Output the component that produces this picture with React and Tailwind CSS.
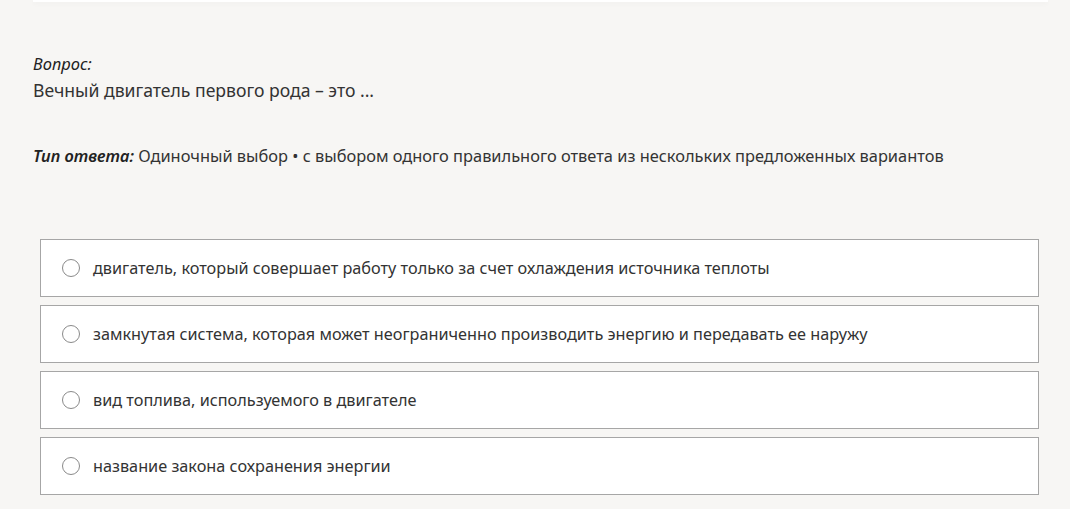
const options = [
  "двигатель, который совершает работу только за счет охлаждения источника теплоты",
  "замкнутая система, которая может неограниченно производить энергию и передавать ее наружу",
  "вид топлива, используемого в двигателе",
  "название закона сохранения энергии",
];

export default function App() {
  return (
    <div
      className="min-h-[509px] bg-[#f7f6f4] text-[#2b2b2b]"
      style={{ fontFamily: '"Noto Sans", "Open Sans", sans-serif' }}
    >
      {/* top card edge */}
      <div className="mx-[33px] mr-[22px] h-[2px] bg-white shadow-[0_2px_4px_rgba(0,0,0,0.04)]" />

      <div className="pl-[33px] pr-[31px] pt-[51px]">
        <p className="text-[16.5px] italic leading-[22px] text-[#222]">Вопрос:</p>
        <p className="mt-[3px] text-[17.6px] leading-[24px] text-[#333]">
          Вечный двигатель первого рода – это ...
        </p>

        <p className="mt-[43px] text-[16.4px] leading-[22px] text-[#333]">
          <span className="font-semibold italic text-[#222]">Тип ответа:</span>{" "}
          Одиночный выбор • с выбором одного правильного ответа из нескольких
          предложенных вариантов
        </p>

        <div className="mt-[72px] ml-[7px] flex flex-col gap-[8px]">
          {options.map((text) => (
            <label
              key={text}
              className="flex h-[58px] items-center border border-[#a6a6a6] bg-white pl-[21px]"
            >
              <span className="h-[18px] w-[18px] rounded-full border border-[#8a8a8a] bg-white" />
              <span className="ml-[13px] text-[16.25px] text-[#333]">{text}</span>
            </label>
          ))}
        </div>
      </div>
    </div>
  );
}
